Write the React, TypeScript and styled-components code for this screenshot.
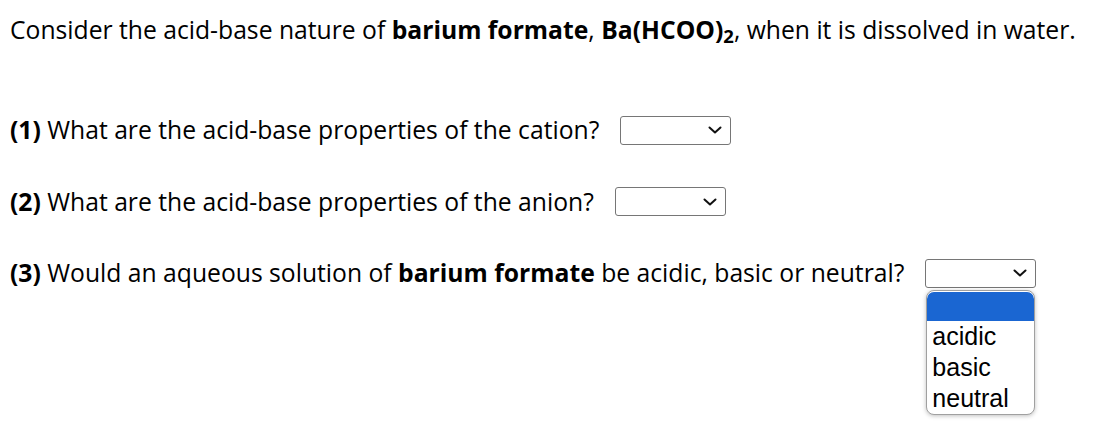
import React from 'react';
import styled, { createGlobalStyle } from 'styled-components';

const GlobalStyle = createGlobalStyle`
  html, body {
    margin: 0;
    padding: 0;
    background: #ffffff;
  }
  body {
    font-family: "Open Sans", "Liberation Sans", sans-serif;
    color: #000;
  }
`;

const Page = styled.div`
  min-height: 438px;
  box-sizing: border-box;
  padding: 13px 10px 0;
  font-size: 24.7px;
  line-height: 34px;
`;

const Intro = styled.p`
  margin: 0 0 66px;

  sub {
    font-size: 0.75em;
    line-height: 0;
    vertical-align: -0.22em;
  }
`;

const Question = styled.div`
  display: flex;
  align-items: center;
  gap: 21px;
  height: 34px;
  margin-bottom: 37.5px;
`;

const SelectWrap = styled.div`
  position: relative;
`;

const SelectBox = styled.div<{ $width: number }>`
  width: ${p => p.$width}px;
  height: 29px;
  box-sizing: border-box;
  border: 1px solid #767676;
  border-radius: 3px;
  background: #fff;
  display: flex;
  align-items: center;
  justify-content: flex-end;
  padding-right: 8px;
`;

const Popup = styled.ul`
  position: absolute;
  top: 31px;
  left: 1px;
  width: 109px;
  margin: 0;
  padding: 1px 0 0;
  list-style: none;
  box-sizing: border-box;
  border: 1px solid #a0a0a0;
  border-radius: 8px;
  background: #fff;
  box-shadow: 0 1px 4px rgba(0, 0, 0, 0.25);
  overflow: hidden;
  font-family: "Liberation Sans", Arial, sans-serif;
  font-size: 25px;
  color: #000;
`;

const Option = styled.li<{ $active?: boolean }>`
  height: ${p => (p.$active ? 29 : 31)}px;
  line-height: 31px;
  padding-left: 5px;
  background: ${p => (p.$active ? '#1a66d2' : 'transparent')};
  border-radius: ${p => (p.$active ? '7px 7px 0 0' : '0')};
`;

const Chevron = () => (
  <svg width="14" height="8" viewBox="0 0 14 8">
    <path d="M1.5 1.5 L7 6.5 L12.5 1.5" fill="none" stroke="#111" strokeWidth="2" strokeLinecap="round" strokeLinejoin="round" />
  </svg>
);

const Select = ({ width, open }: { width: number; open?: boolean }) => (
  <SelectWrap>
    <SelectBox $width={width}>
      <Chevron />
    </SelectBox>
    {open && (
      <Popup>
        <Option $active />
        <Option>acidic</Option>
        <Option>basic</Option>
        <Option>neutral</Option>
      </Popup>
    )}
  </SelectWrap>
);

export default function App() {
  return (
    <>
      <GlobalStyle />
      <Page>
        <Intro>
          Consider the acid-base nature of <b>barium formate</b>, <b>Ba(HCOO)<sub>2</sub></b>, when it is dissolved in water.
        </Intro>
        <Question>
          <span><b>(1)</b> What are the acid-base properties of the cation?</span>
          <Select width={111} />
        </Question>
        <Question>
          <span><b>(2)</b> What are the acid-base properties of the anion?</span>
          <Select width={111} />
        </Question>
        <Question>
          <span><b>(3)</b> Would an aqueous solution of <b>barium formate</b> be acidic, basic or neutral?</span>
          <Select width={111} open />
        </Question>
      </Page>
    </>
  );
}
